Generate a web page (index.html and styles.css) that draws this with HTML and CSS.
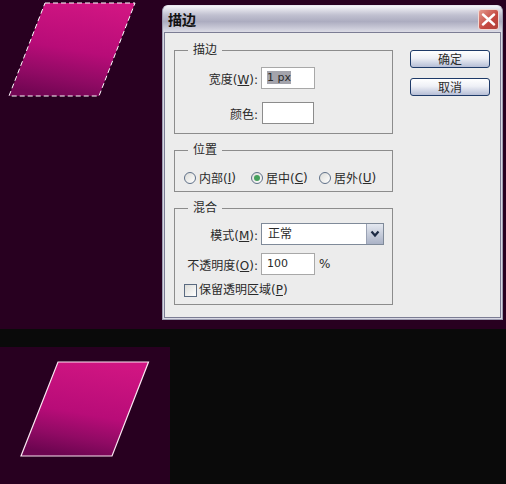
FILE: index.html
```html
<!DOCTYPE html>
<html lang="zh-CN">
<head>
  <meta charset="UTF-8" />
  <title>描边</title>
  <link rel="stylesheet" href="styles.css">
</head>
<body>
  <div class="top">
    <!-- selection shape -->
    <svg class="shape-top" width="162" height="329" viewBox="0 0 162 329">
      <defs>
        <linearGradient id="fillTop" x1="0.62" y1="0" x2="0.38" y2="1">
          <stop offset="0" stop-color="#d01582" />
          <stop offset="0.5" stop-color="#b80c78" />
          <stop offset="0.8" stop-color="#900a64" />
          <stop offset="1" stop-color="#740654" />
        </linearGradient>
      </defs>
      <polygon points="45,3 135,3 99,96 9,96" fill="url(#fillTop)" />
      <polygon class="marching" points="45,3 135,3 99,96 9,96" />
    </svg>

    <div class="dialog">
      <div class="titlebar">
        <span class="title">描边</span>
        <span class="close">
          <svg width="15" height="13" viewBox="0 0 15 13">
            <path d="M2 1.500 L13 11.500 M13 1.500 L2 11.500" stroke="#fff" stroke-width="2.400" stroke-linecap="round" />
          </svg>
        </span>
      </div>

      <div class="body">
        <div class="groups">
          <fieldset class="group group-stroke">
            <legend>描边</legend>
            <div class="row">
              <label class="lbl">宽度(<u>W</u>):</label>
              <div class="field"><span class="selected">1 px</span></div>
            </div>
            <div class="row">
              <label class="lbl">颜色:</label>
              <div class="swatch"></div>
            </div>
          </fieldset>

          <fieldset class="group group-pos">
            <legend>位置</legend>
            <div class="radios">
              <div class="radio-item"><span class="radio"></span>内部(<u>I</u>)</div>
              <div class="radio-item"><span class="radio on"></span>居中(<u>C</u>)</div>
              <div class="radio-item"><span class="radio"></span>居外(<u>U</u>)</div>
            </div>
          </fieldset>

          <fieldset class="group group-blend">
            <legend>混合</legend>
            <div class="row">
              <label class="lbl">模式(<u>M</u>):</label>
              <div class="select">
                <span class="select-text">正常</span>
                <span class="select-btn">
                  <svg width="10" height="8" viewBox="0 0 10 8">
                    <path d="M1.500 1.500 L5 5.500 L8.500 1.500" fill="none" stroke="#1c2a44" stroke-width="2.200" />
                  </svg>
                </span>
              </div>
            </div>
            <div class="row">
              <label class="lbl">不透明度(<u>O</u>):</label>
              <div class="field">100</div>
              <span class="unit">%</span>
            </div>
            <div class="check-row"><span class="check"></span>保留透明区域(<u>P</u>)</div>
          </fieldset>
        </div>

        <div class="buttons">
          <div class="btn">确定</div>
          <div class="btn">取消</div>
        </div>
      </div>
    </div>
  </div>

  <div class="bottom">
    <div class="result">
      <svg width="170" height="137" viewBox="0 0 170 137">
        <defs>
          <linearGradient id="fillBottom" x1="0.62" y1="0" x2="0.38" y2="1">
            <stop offset="0" stop-color="#d01582" />
            <stop offset="0.55" stop-color="#b80c78" />
            <stop offset="0.8" stop-color="#900a64" />
            <stop offset="1" stop-color="#6c0550" />
          </linearGradient>
        </defs>
        <polygon points="58,15 148.500,15 112,109 21,109" fill="url(#fillBottom)" stroke="#fbe6f2" stroke-width="1.200" />
      </svg>
    </div>
  </div>
</body>
</html>
```

FILE: styles.css
```css
body {
  margin: 0;
  width: 506px;
  height: 484px;
  overflow: hidden;
  background: #0a0a0a;
  font-family: "DejaVu Sans", "Noto Sans CJK SC", sans-serif;
  font-size: 12px;
  color: #2a2a2a;
}

.top {
  display: flex;
  height: 329px;
  background: #280020;
}

.shape-top {
  display: block;
  flex: none;
}

.marching {
  fill: none;
  stroke: #fff;
  stroke-width: 1;
  stroke-dasharray: 5 3;
}

.dialog {
  width: 341px;
  height: 315px;
  margin-top: 5px;
  box-sizing: border-box;
  display: flex;
  flex-direction: column;
  border: 1px solid #9c9cb0;
  border-top-color: #e8e8f0;
  border-radius: 6px 6px 0 0;
  background: #d8d8e4;
}

.titlebar {
  height: 26px;
  flex: none;
  display: flex;
  align-items: center;
  justify-content: space-between;
  padding: 0 3px 0 5px;
  border-radius: 5px 5px 0 0;
  background: linear-gradient(#f4f4f8 0, #c0c0d0 35%, #acacc0 60%, #dcdce6 100%);
}

.title {
  font-size: 14px;
  font-weight: bold;
  color: #111;
}

.close {
  width: 21px;
  height: 21px;
  box-sizing: border-box;
  display: flex;
  align-items: center;
  justify-content: center;
  border: 1px solid #f0d8d4;
  border-radius: 3px;
  background: linear-gradient(135deg, #e49a8e, #c4473f 60%, #b0443e);
}

.body {
  flex: 1;
  display: flex;
  margin: 0 1px 1px;
  padding: 10px 0 0 9px;
  border: 1px solid #7c7d94;
  background: #ececec;
}

.groups {
  width: 219px;
  display: flex;
  flex-direction: column;
  gap: 9px;
}

.group {
  margin: 0;
  padding: 0;
  min-width: 0;
  border: 1px solid #8c8c8c;
}

.group legend {
  margin-left: 13px;
  padding: 0 5px;
  line-height: 14px;
}

.group-stroke {
  height: 91px;
  display: flex;
  flex-direction: column;
  padding-top: 10px;
  gap: 13px;
  box-sizing: border-box;
}

.group-stroke .row {
  margin-bottom: 0;
}

.group-pos {
  height: 49px;
  box-sizing: border-box;
}

.group-blend {
  height: 104px;
  box-sizing: border-box;
  padding-top: 8px;
}

.row {
  display: flex;
  align-items: center;
  margin-bottom: 8px;
}

.lbl {
  width: 83px;
  margin-right: 3px;
  text-align: right;
  white-space: nowrap;
}

.field {
  width: 54px;
  height: 22px;
  box-sizing: border-box;
  padding-left: 5px;
  font-size: 11px;
  line-height: 20px;
  background: #fff;
  border: 1px solid #a8a8a8;
}

.selected {
  background: #a4a4ac;
}

.swatch {
  width: 52px;
  height: 22px;
  margin-left: 1px;
  box-sizing: border-box;
  background: #fff;
  border: 1px solid #8c8c8c;
}

.unit {
  margin-left: 4px;
}

.radios {
  display: flex;
  padding: 12px 0 0 9px;
}

.radio-item {
  width: 67px;
  display: flex;
  align-items: center;
  white-space: nowrap;
}

.radio-item + .radio-item + .radio-item {
  margin-left: 1px;
}

.radio {
  width: 12px;
  height: 12px;
  margin-right: 3px;
  box-sizing: border-box;
  display: flex;
  align-items: center;
  justify-content: center;
  border: 1px solid #5f7088;
  border-radius: 50%;
  background: linear-gradient(135deg, #dcdcd8, #fff);
}

.radio.on::after {
  content: "";
  width: 6px;
  height: 6px;
  border-radius: 50%;
  background: #45a05c;
}

.select {
  width: 123px;
  height: 22px;
  box-sizing: border-box;
  display: flex;
  border: 1px solid #7f8a99;
  background: #fff;
}

.select-text {
  flex: 1;
  padding-left: 6px;
  line-height: 20px;
}

.select-btn {
  width: 16px;
  display: flex;
  align-items: center;
  justify-content: center;
  background: linear-gradient(#e4e8f0, #aab2c6);
  border-left: 1px solid #9aa2b4;
}

.check-row {
  display: flex;
  align-items: center;
  margin-top: 1px;
  padding-left: 9px;
  line-height: 15px;
  white-space: nowrap;
}

.check {
  width: 13px;
  height: 13px;
  margin-right: 2px;
  box-sizing: border-box;
  border: 1px solid #5a6a80;
  background: linear-gradient(135deg, #dcdcd8, #fff);
}

.buttons {
  display: flex;
  flex-direction: column;
  gap: 10px;
  margin: 7px 0 0 17px;
}

.btn {
  width: 80px;
  height: 18px;
  box-sizing: border-box;
  text-align: center;
  line-height: 18px;
  border: 1px solid #1e3a68;
  border-radius: 3px;
  background: linear-gradient(#fff 0, #eef0f6 45%, #b6bed6 100%);
}

.bottom {
  height: 155px;
  box-sizing: border-box;
  padding-top: 18px;
}

.result {
  width: 170px;
  height: 137px;
  background: #280020;
}

.result svg {
  display: block;
}
```
